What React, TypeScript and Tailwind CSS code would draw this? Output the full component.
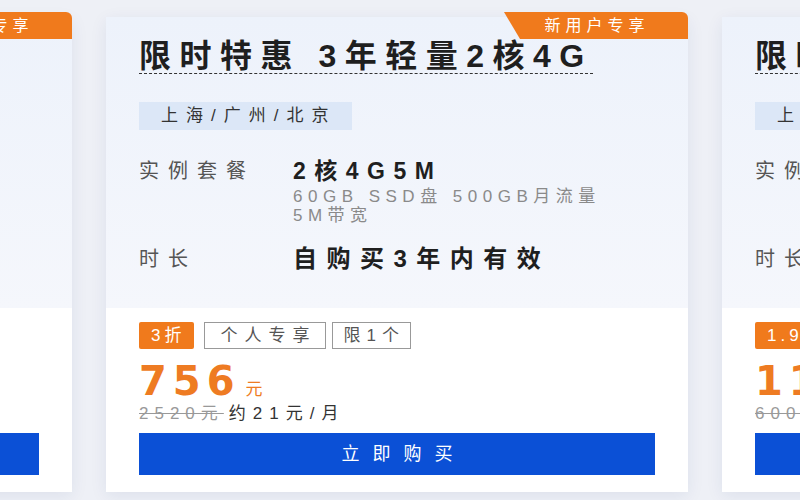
import React from "react";

type Plan = {
  badge: string;
  title: string;
  region: string;
  spec: string;
  specSub: string[];
  duration: string;
  discount: string;
  price: string;
  original: string;
  monthly: string;
};

const plans: Plan[] = [
  {
    badge: "新用户专享",
    title: "限时特惠 1年轻量2核2G",
    region: "上海/广州/北京",
    spec: "2核2G4M",
    specSub: ["50GB SSD盘 300GB月流量", "4M带宽"],
    duration: "自购买1年内有效",
    discount: "2.5折",
    price: "99",
    original: "396元",
    monthly: "约8元/月",
  },
  {
    badge: "新用户专享",
    title: "限时特惠 3年轻量2核4G",
    region: "上海/广州/北京",
    spec: "2核4G5M",
    specSub: ["60GB SSD盘 500GB月流量", "5M带宽"],
    duration: "自购买3年内有效",
    discount: "3折",
    price: "756",
    original: "2520元",
    monthly: "约21元/月",
  },
  {
    badge: "新用户专享",
    title: "限时特惠 轻量4核8G",
    region: "上海/广州/北京",
    spec: "4核8G12M",
    specSub: ["180GB SSD盘 2000GB月流量", "12M带宽"],
    duration: "自购买1年内有效",
    discount: "1.9折",
    price: "1150",
    original: "6000元",
    monthly: "约96元/月",
  },
];

function PlanCard({ p }: { p: Plan }) {
  return (
    <div className="relative w-[582px] h-[475px] shrink-0 bg-white flex flex-col shadow-[0_4px_16px_rgba(30,50,110,0.08)]">
      <div className="absolute right-0 -top-[5px] w-[184px] h-[27px] bg-[#f07a1c] rounded-tr-[6px] [clip-path:polygon(0_0,100%_0,100%_100%,16px_100%)] flex items-center justify-center pl-[2px] text-white text-[16px] tracking-[5px]">
        {p.badge}
      </div>
      <div className="h-[291px] bg-gradient-to-b from-[#edf2fb] to-[#f5f7fc] px-[33px] pt-[22px]">
        <div className="inline-block border-b border-dashed border-[#333]">
          <h2 className="text-[32px] leading-[34px] font-bold text-[#1f1f1f] tracking-[8.5px] whitespace-nowrap">
            {p.title}
          </h2>
        </div>
        <div className="mt-[28px] inline-flex items-center h-[28px] pl-[22px] pr-[16px] bg-[#dce7f7] text-[17px] text-[#333] tracking-[8px]">
          {p.region}
        </div>
        <div className="mt-[29px] flex">
          <div className="w-[154px] text-[20px] leading-[24px] text-[#555] tracking-[9px]">实例套餐</div>
          <div className="flex flex-col">
            <div className="text-[23px] leading-[24px] font-bold text-[#1f1f1f] tracking-[8.5px]">{p.spec}</div>
            <div className="mt-[4px] text-[17px] leading-[19px] text-[#8a8a8a] tracking-[5.5px] whitespace-nowrap">
              {p.specSub.map((s) => (
                <div key={s}>{s}</div>
              ))}
            </div>
          </div>
        </div>
        <div className="mt-[21px] flex items-center">
          <div className="w-[154px] text-[20px] leading-[26px] text-[#555] tracking-[9px]">时长</div>
          <div className="text-[24px] leading-[26px] font-bold text-[#1f1f1f] tracking-[9.5px]">{p.duration}</div>
        </div>
      </div>
      <div className="flex-1 px-[33px] pt-[14px] flex flex-col">
        <div className="flex items-center text-[17px]">
          <span className="h-[27px] pl-[12px] pr-[9px] flex items-center bg-[#f07a1c] text-white tracking-[4px] rounded-[2px]">
            {p.discount}
          </span>
          <span className="ml-[10px] h-[27px] pl-[15px] pr-[9px] flex items-center border border-[#999] text-[#555] tracking-[7px]">
            个人专享
          </span>
          <span className="ml-[6px] h-[27px] pl-[10px] pr-[5px] flex items-center border border-[#999] text-[#555] tracking-[6px]">
            限1个
          </span>
        </div>
        <div className="mt-[12px] flex items-end h-[40px]">
          <span className="font-['DejaVu_Sans',sans-serif] text-[40px] leading-[40px] font-bold text-[#ee7b22] tracking-[6px]">
            {p.price}
          </span>
          <span className="ml-[5px] mb-[1px] text-[17px] leading-[20px] text-[#ee7b22]">元</span>
        </div>
        <div className="mt-[2px] flex items-center text-[17px] leading-[22px]">
          <span className="line-through text-[#999] tracking-[6px]">{p.original}</span>
          <span className="ml-[5px] text-[#333] tracking-[7px]">{p.monthly}</span>
        </div>
        <button className="mt-[8px] h-[42px] w-full bg-[#0b50d6] text-white text-[18px] tracking-[13px] flex items-center justify-center pl-[13px]">
          立即购买
        </button>
      </div>
    </div>
  );
}

export default function App() {
  return (
    <div
      className="w-[800px] h-[500px] overflow-hidden bg-[#eef0f6]"
      style={{ fontFamily: '"Liberation Sans", "Noto Sans CJK SC", sans-serif' }}
    >
      <div className="flex gap-[34px] ml-[-510px] pt-[17px]">
        {plans.map((p) => (
          <PlanCard key={p.title} p={p} />
        ))}
      </div>
    </div>
  );
}
